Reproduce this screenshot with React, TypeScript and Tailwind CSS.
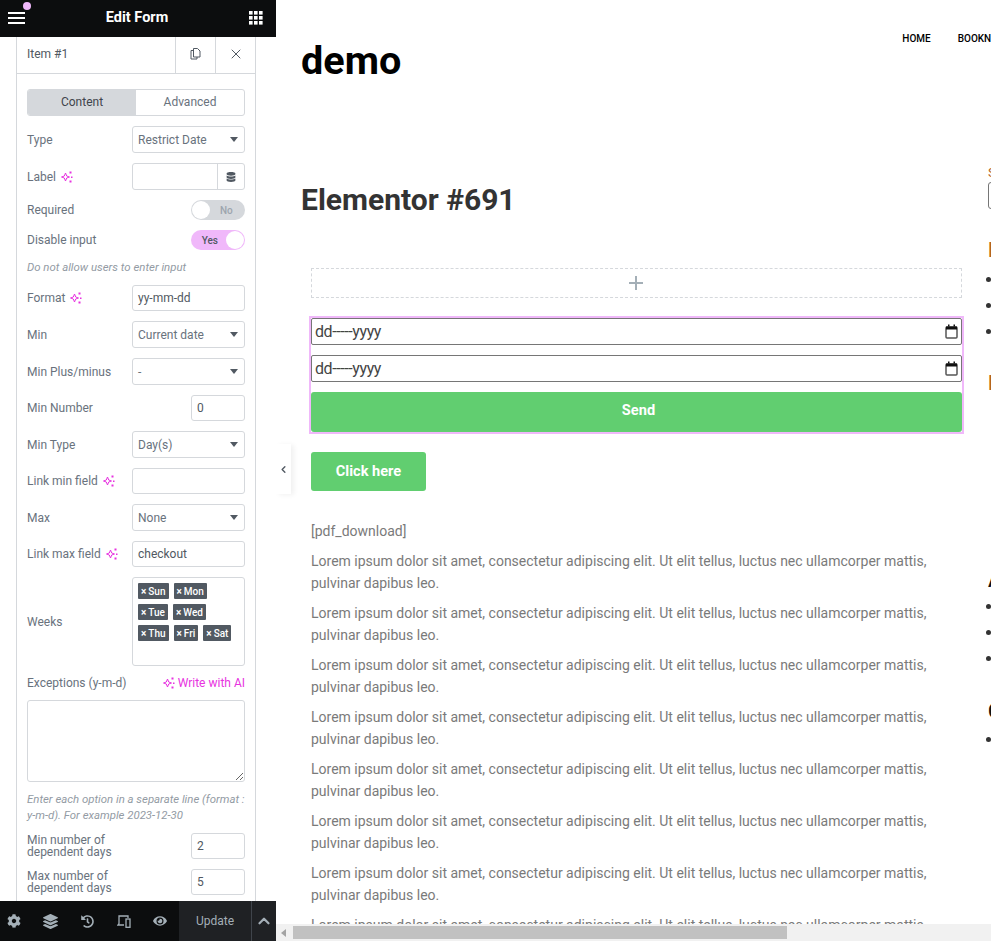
import React from "react";
import { FaCog, FaDatabase, FaEye, FaHistory, FaLayerGroup } from "react-icons/fa";
import { ChevronLeft, ChevronUp, X } from "lucide-react";

const lorem =
  "Lorem ipsum dolor sit amet, consectetur adipiscing elit. Ut elit tellus, luctus nec ullamcorper mattis, pulvinar dapibus leo.";

function Sparkle() {
  return (
    <svg width="12" height="12" viewBox="0 0 12 12" className="shrink-0 text-[#e733e0]">
      <path d="M4.5 2 L5.7 5 L8.5 6 L5.7 7 L4.5 10 L3.3 7 L.5 6 L3.3 5 Z" fill="none" stroke="currentColor" strokeWidth="1" />
      <rect x="8.5" y=".5" width="2" height="2" fill="currentColor" />
      <rect x="10" y="5.5" width="1.5" height="1.5" fill="currentColor" />
      <rect x="8.5" y="9.5" width="2" height="2" fill="currentColor" />
    </svg>
  );
}

function Caret() {
  return (
    <svg width="8" height="5" viewBox="0 0 8 5" className="shrink-0">
      <path d="M0 0 H8 L4 5 Z" fill="#515962" />
    </svg>
  );
}

function Row({ label, ai, children }: { label: string; ai?: boolean; children: React.ReactNode }) {
  return (
    <div className="flex items-center justify-between">
      <span className="flex items-center gap-[5px] text-xs text-[#69727d]">
        {label}
        {ai && <Sparkle />}
      </span>
      {children}
    </div>
  );
}

function SelectBox({ value }: { value: string }) {
  return (
    <div className="flex h-[27px] w-[113px] items-center justify-between rounded-[3px] border border-[#d5d8dc] bg-white pl-[5px] pr-[6px] text-xs text-[#69727d]">
      {value}
      <Caret />
    </div>
  );
}

function TextBox({ value = "", narrow }: { value?: string; narrow?: boolean }) {
  return (
    <div
      className={`flex h-[26px] items-center rounded-[3px] border border-[#d5d8dc] bg-white pl-[5px] text-xs text-[#515962] ${
        narrow ? "w-[54px]" : "w-[113px]"
      }`}
    >
      {value}
    </div>
  );
}

function Toggle({ on }: { on?: boolean }) {
  return (
    <div
      className={`flex h-5 w-[54px] items-center rounded-full p-px ${
        on ? "justify-end gap-[8px] bg-[#f0b8fa]" : "gap-[10px] bg-[#d5d8dc]"
      }`}
    >
      {on && <span className="text-[10px] font-medium text-[#515962]">Yes</span>}
      <span className="h-[18px] w-[18px] rounded-full bg-white" />
      {!on && <span className="text-[10px] font-medium text-[#9da5ae]">No</span>}
    </div>
  );
}

function Chip({ text }: { text: string }) {
  return (
    <span className="flex h-4 items-center rounded-[1px] bg-[#515962] px-[3px] text-[10px] font-medium text-white">
      <span className="mr-[2px] text-[10px] font-bold">×</span>
      {text}
    </span>
  );
}

function Panel() {
  return (
    <aside className="flex h-full w-[276px] shrink-0 flex-col overflow-hidden bg-white">
      {/* top bar */}
      <div className="relative flex h-[37px] shrink-0 items-center justify-between bg-[#0c0d0e] pb-[2px] pl-2 pr-[13px] text-white">
        <svg width="17" height="12" viewBox="0 0 17 12">
          <rect y="0" width="17" height="2" fill="white" />
          <rect y="5" width="17" height="2" fill="white" />
          <rect y="10" width="17" height="2" fill="white" />
        </svg>
        <span className="text-[14.5px] font-bold">Edit Form</span>
        <svg width="14" height="14" viewBox="0 0 14 14" fill="white">
          {[0, 5, 10].map((y) =>
            [0, 5, 10].map((x) => <rect key={`${x}-${y}`} x={x} y={y} width="3.6" height="3.6" />)
          )}
        </svg>
        <span className="absolute left-[23px] top-[2px] h-2 w-2 rounded-full bg-[#f0b8fa]" />
      </div>

      <div className="ml-4 mr-5 min-h-0 flex-1 overflow-hidden border-x border-[#d5d8dc]">
        {/* repeater item header */}
        <div className="flex h-[37px] items-center border-b border-[#d5d8dc] text-xs text-[#515962]">
          <span className="flex-1 pb-[2px] pl-[10px]">Item #1</span>
          <span className="flex h-full w-10 items-center justify-center border-l border-[#d5d8dc] pb-[3px]">
            <svg width="11" height="12" viewBox="0 0 11 12" fill="none" stroke="#515962" strokeWidth="1">
              <path d="M3.5 2.5 H1 V11 H7 V9" />
              <path d="M3.5 .5 H7.5 L10 3 V9 H3.5 Z" />
            </svg>
          </span>
          <span className="flex h-full w-10 items-center justify-center border-l border-[#d5d8dc] pb-[2px]">
            <X size={16} color="#515962" strokeWidth={1.5} />
          </span>
        </div>

        <div className="flex flex-col gap-[10px] px-[10px] pt-[15px]">
          <div className="flex h-[27px] overflow-hidden rounded-[3px] border border-[#d5d8dc] pb-0 text-xs">
            <span className="flex w-[108px] items-center justify-center bg-[#d5d8dc] pb-px text-[#3f444b]">Content</span>
            <span className="flex flex-1 items-center justify-center pb-px text-[#69727d]">Advanced</span>
          </div>

          <Row label="Type">
            <SelectBox value="Restrict Date" />
          </Row>
          <Row label="Label" ai>
            <div className="flex h-[27px] w-[113px] rounded-[3px] border border-[#d5d8dc]">
              <span className="flex-1" />
              <span className="flex w-[27px] items-center justify-center border-l border-[#d5d8dc]">
                <FaDatabase size={10} color="#515962" />
              </span>
            </div>
          </Row>
          <Row label="Required">
            <Toggle />
          </Row>
          <Row label="Disable input">
            <Toggle on />
          </Row>
          <p className="h-[15px] text-[11.4px] italic leading-[15px] text-[#939ba4]">Do not allow users to enter input</p>

          <Row label="Format" ai>
            <TextBox value="yy-mm-dd" />
          </Row>
          <Row label="Min">
            <SelectBox value="Current date" />
          </Row>
          <Row label="Min Plus/minus">
            <SelectBox value="-" />
          </Row>
          <Row label="Min Number">
            <TextBox value="0" narrow />
          </Row>
          <Row label="Min Type">
            <SelectBox value="Day(s)" />
          </Row>
          <Row label="Link min field" ai>
            <TextBox />
          </Row>
          <Row label="Max">
            <SelectBox value="None" />
          </Row>
          <Row label="Link max field" ai>
            <TextBox value="checkout" />
          </Row>
          <Row label="Weeks">
            <div className="flex h-[89px] w-[113px] flex-col gap-[5px] rounded-[3px] border border-[#d5d8dc] pl-[5px] pt-[5px]">
              <div className="flex gap-[5px]">
                <Chip text="Sun" />
                <Chip text="Mon" />
              </div>
              <div className="flex gap-[5px]">
                <Chip text="Tue" />
                <Chip text="Wed" />
              </div>
              <div className="flex gap-[5px]">
                <Chip text="Thu" />
                <Chip text="Fri" />
                <Chip text="Sat" />
              </div>
            </div>
          </Row>

          <div className="flex h-[14px] items-center justify-between text-xs">
            <span className="text-[#69727d]">Exceptions (y-m-d)</span>
            <span className="flex items-center gap-[3px] text-[#e733e0]">
              <Sparkle />
              Write with AI
            </span>
          </div>
          <textarea readOnly className="h-[82px] w-full rounded-[3px] border border-[#d5d8dc] bg-white" />
          <p className="-mt-[1px] h-[32px] text-[11.4px] italic leading-4 text-[#939ba4]">
            Enter each option in a separate line (format : y-m-d). For example 2023-12-30
          </p>
          <div className="flex items-center justify-between">
            <span className="w-[100px] text-xs leading-[12px] text-[#69727d]">Min number of dependent days</span>
            <TextBox value="2" narrow />
          </div>
          <div className="flex items-center justify-between">
            <span className="w-[100px] text-xs leading-[12px] text-[#69727d]">Max number of dependent days</span>
            <TextBox value="5" narrow />
          </div>
        </div>
      </div>

      {/* footer toolbar */}
      <div className="flex h-10 shrink-0 items-center bg-[#0c0d0e] text-[#a4afb7]">
        <div className="flex w-[179px] items-center gap-[8.5px]">
          <span className="flex w-[28px] justify-center"><FaCog size={14} /></span>
          <span className="flex w-[28px] justify-center"><FaLayerGroup size={15} /></span>
          <span className="flex w-[28px] justify-center"><FaHistory size={13} /></span>
          <span className="flex w-[28px] justify-center">
            <svg width="14" height="13" viewBox="0 0 14 13" fill="none" stroke="currentColor" strokeWidth="1.3">
              <path d="M7 10 H1 L2 8.5 V1 H11 V3" />
              <rect x="9" y="4" width="4" height="8.3" />
            </svg>
          </span>
          <span className="flex w-[28px] justify-center"><FaEye size={14} /></span>
        </div>
        <div className="flex h-full w-[72px] items-center justify-center bg-[#1f2124] text-xs">Update</div>
        <div className="flex h-full flex-1 items-center justify-center border-l border-[#3f444b] bg-[#1f2124]">
          <ChevronUp size={18} strokeWidth={3} />
        </div>
      </div>
    </aside>
  );
}

function DateField() {
  return (
    <div className="flex h-[27px] items-center justify-between rounded-[2px] border border-[#767676] bg-white pl-[3px] pr-[3px] text-[16px] text-[#444]">
      <span className="tracking-[-0.4px]">dd-----yyyy</span>
      <svg width="13" height="15" viewBox="0 0 13 15" fill="none">
        <rect x="1" y="3" width="11" height="11" rx="1" stroke="#555" strokeWidth="1.5" />
        <rect x="1" y="2.5" width="11" height="3" fill="#111" />
        <rect x="3" y="0.5" width="1.5" height="2" fill="#111" />
        <rect x="8.5" y="0.5" width="1.5" height="2" fill="#111" />
      </svg>
    </div>
  );
}

function SidebarList({ count, className }: { count: number; className: string }) {
  return (
    <ul className={`flex flex-col ${className}`}>
      {Array.from({ length: count }).map((_, i) => (
        <li key={i} className="-ml-[2px] flex h-[26px] items-center gap-4">
          <span className="h-[5px] w-[5px] rounded-full bg-[#333]" />
          <span className="text-sm text-[#333]">Entry</span>
        </li>
      ))}
    </ul>
  );
}

function Sidebar() {
  return (
    <div className="mt-[4px] flex w-[200px] shrink-0 flex-col pl-[2px]">
      <span className="h-[18px] text-[13px] leading-[18px] text-[#b5651d]">Search</span>
      <div className="h-[27px] w-[120px] rounded-[3px] border border-[#767676]" />
      <h3 className="mt-[29px] h-[24px] text-[20px] font-medium leading-[24px] text-[#b5651d]">Recent Posts</h3>
      <SidebarList count={3} className="mt-[4px]" />
      <h3 className="mt-[27px] h-[24px] text-[20px] font-medium leading-[24px] text-[#b5651d]">Recent Comments</h3>
      <h3 className="mt-[173px] h-[24px] text-[20px] font-medium leading-[24px] text-[#111]">Archives</h3>
      <SidebarList count={3} className="mt-[1px]" />
      <h3 className="mt-[28px] h-[24px] text-[20px] font-medium leading-[24px] text-[#111]">Categories</h3>
      <SidebarList count={1} className="mt-[3px]" />
    </div>
  );
}

function Preview() {
  return (
    <main className="relative flex h-full min-w-0 flex-1 flex-col overflow-hidden bg-white">
      <div className="min-h-0 flex-1 overflow-hidden">
        <div className="w-[1100px]">
          <header className="flex h-[160px] gap-[501px] pl-[25px] pt-[37px]">
            <span className="text-[39.6px] font-bold leading-[47px] text-black">demo</span>
            <nav className="flex gap-[27px] text-[10px] font-medium uppercase leading-[3px] text-black">
              <span>Home</span>
              <span>Booknow</span>
            </nav>
          </header>

          <div className="flex">
            <div className="w-[710px] shrink-0">
              <h1 className="pl-[25px] pt-[22px] text-[30px] font-bold leading-[36px] text-[#333]">Elementor #691</h1>

              <div className="ml-[35px] w-[651px]">
                <div className="mt-[50px] flex h-[30px] items-center justify-center border border-dashed border-[#d5d8dc] pb-[1px] pr-[1px] text-[#a4afb7]">
                  <svg width="14" height="14" viewBox="0 0 14 14">
                    <path d="M7 0 V14 M0 7 H14" stroke="currentColor" strokeWidth="2" />
                  </svg>
                </div>

                <div className="mt-[20px] flex flex-col gap-[10px] outline-[2px] outline-solid outline-[#f0b8fa]">
                  <DateField />
                  <DateField />
                  <button className="h-10 rounded-[3px] bg-[#61ce70] pb-[2px] pl-[4px] text-[14.6px] font-bold text-white">Send</button>
                </div>

                <button className="mt-[20px] h-[39px] w-[115px] rounded-[3px] bg-[#61ce70] text-[14.6px] font-bold text-white">
                  Click here
                </button>

                <div className="mt-[30px] text-[14px] leading-[21.6px] text-[#7a7a7a]">
                  <p className="mb-[8.8px]">[pdf_download]</p>
                  {Array.from({ length: 8 }).map((_, i) => (
                    <p key={i} className="mb-[8.8px]">
                      {lorem}
                    </p>
                  ))}
                </div>
              </div>
            </div>
            <Sidebar />
          </div>
        </div>
      </div>

      {/* horizontal scrollbar */}
      <div className="flex h-[17px] shrink-0 items-center bg-[#f1f1f1] pl-[5px]">
        <svg width="6" height="8" viewBox="0 0 6 8" className="shrink-0">
          <path d="M0 4 L5 0 V8 Z" fill="#a3a3a3" />
        </svg>
        <div className="ml-[6px] h-[13px] w-[494px] bg-[#c1c1c1]" />
      </div>

      {/* panel collapse handle */}
      <div className="absolute left-0 top-[444px] flex h-[50px] w-[15px] items-center justify-center bg-white shadow-[3px_1px_5px_rgba(0,0,0,0.06)]">
        <ChevronLeft size={11} color="#515962" strokeWidth={3} />
      </div>
    </main>
  );
}

export default function App() {
  return (
    <div className="flex h-[941px] w-[991px] overflow-hidden font-['Roboto',sans-serif]">
      <Panel />
      <Preview />
    </div>
  );
}
